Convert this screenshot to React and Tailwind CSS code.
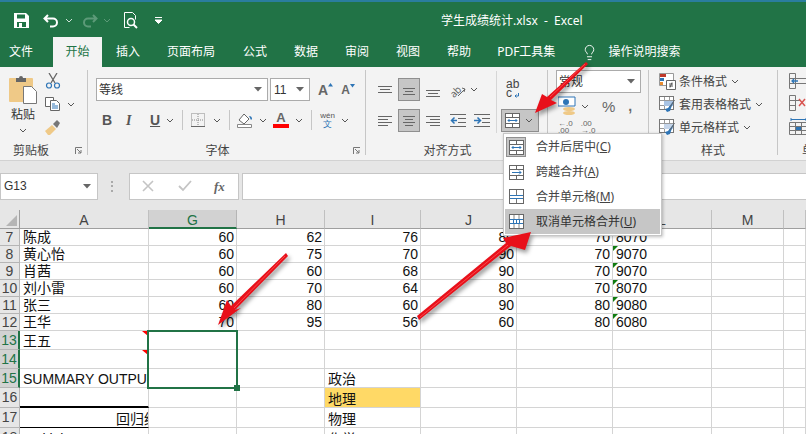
import React from "react";
import { Lightbulb } from "lucide-react";

const Caret = ({ className = "", color = "#555" }) => (
  <svg width="8" height="5" viewBox="0 0 8 5" className={className}>
    <path d="M1 1l3 3 3-3" fill="none" stroke={color} strokeWidth="1" />
  </svg>
);

const Solid = ({ className = "" }) => (
  <svg width="8" height="5" viewBox="0 0 8 5" className={className}>
    <path d="M0 0h8L4 4.500z" fill="#666" />
  </svg>
);

// lines: [x1, x2, y]
const Lines = ({ lines, w = 14, h = 12, color = "#666" }) => (
  <svg width={w} height={h} viewBox={`0 0 ${w} ${h}`} className="shrink-0">
    {lines.map((l, i) => (
      <line key={i} x1={l[0]} x2={l[1]} y1={l[2] + 0.5} y2={l[2] + 0.5} stroke={color} />
    ))}
  </svg>
);

const MergeIcon = ({ kind }) => (
  <svg width="15" height="15" viewBox="0 0 15 15" className="shrink-0">
    <rect x="0.500" y="0.500" width="14" height="14" fill="#fff" stroke="#666" />
    {kind === "center" && (
      <g>
        <path d="M1 4.500h13M1 10.500h13M7.500 1v3M7.500 11v3" stroke="#666" />
        <path d="M3 7.500h9M4.500 6l-1.500 1.500 1.500 1.500M10.500 6l1.500 1.500-1.500 1.500" stroke="#2e75b6" fill="none" />
      </g>
    )}
    {kind === "across" && (
      <g>
        <path d="M1 4.500h13M1 10.500h13M7.500 1v3M7.500 11v3" stroke="#666" />
        <path d="M3 7.500h9M10 5.500l2 2-2 2" stroke="#2e75b6" fill="none" />
      </g>
    )}
    {kind === "merge" && (
      <g>
        <path d="M7.500 1v5M7.500 10v4" stroke="#777" />
        <path d="M1 6.500h13M1 9.500h13" stroke="#2e75b6" />
      </g>
    )}
    {kind === "unmerge" && (
      <g>
        <path d="M1 5.500h13M1 9.500h13" stroke="#2e75b6" />
        <path d="M4.500 5v5M7.500 5v5M10.500 5v5" stroke="#2e75b6" />
        <path d="M5 1v4M10 1v4M5 10v4M10 10v4" stroke="#888" />
      </g>
    )}
  </svg>
);

const StyleIcon = ({ accent }) => (
  <svg width="17" height="17" viewBox="0 0 17 17" className="shrink-0">
    <rect x="0.500" y="0.500" width="14" height="13" fill="#fff" stroke="#777" />
    <path d="M1 4.500h13M1 9.500h13M5.500 1v12M10.500 1v12" stroke="#999" />
    <path d="M5 5h9v5H5z" fill={accent} />
    <path d="M15.500 4L9 12l-3 1 2 3 3-1 1-3z" fill="#2e75b6" />
    <path d="M15.500 4L11 11" stroke="#666" />
  </svg>
);

const Launcher = () => (
  <svg width="8" height="8" viewBox="0 0 8 8" className="absolute right-[4px] bottom-0">
    <path d="M0.500 7V0.500H7M2 2l4 4M6 3v3H3" fill="none" stroke="#777" />
  </svg>
);

const Label = ({ children, className = "" }) => (
  <div className={`mt-auto mb-[-3px] text-center text-[12px] leading-[14px] text-[#444] ${className}`}>{children}</div>
);

const Group = ({ className, children }) => (
  <div className={`relative flex flex-col shrink-0 border-r border-[#c6c6c6] ${className}`}>{children}</div>
);

const tabs = [
  ["插入", "ml-[14px]"],
  ["页面布局", "ml-[27px]"],
  ["公式", "ml-[28px]"],
  ["数据", "ml-[27px]"],
  ["审阅", "ml-[27px]"],
  ["视图", "ml-[27px]"],
  ["帮助", "ml-[27px]"],
  ["PDF工具集", "ml-[26px]"],
];

const sheetCols = "grid grid-cols-[20px_129px_88px_88px_96px_96px_96px_99px_72px_22px]";

const rows = [
  { n: 7, h: "h-[17px]", a: "陈成", v: [60, 62, 76, 80, 70], l: "8070" },
  { n: 8, h: "h-[17px]", a: "黄心怡", v: [60, 75, 70, 90, 70], l: "9070" },
  { n: 9, h: "h-[17px]", a: "肖茜", v: [60, 60, 68, 90, 70], l: "9070" },
  { n: 10, h: "h-[17px]", a: "刘小雷", v: [60, 70, 64, 80, 70], l: "8070" },
  { n: 11, h: "h-[17px]", a: "张三", v: [60, 80, 60, 90, 80], l: "9080" },
  { n: 12, h: "h-[17px]", a: "王华", v: [70, 95, 56, 60, 80], l: "6080" },
  { n: 13, h: "h-[19px]", a: "王五", note: true, sel: true },
  { n: 14, h: "h-[19px]", note: true, sel: true },
  { n: 15, h: "h-[19px]", a: "SUMMARY OUTPUT", i: "政治", sel: true },
  { n: 16, h: "h-[20px]", i: "地理", yellow: true, thick: true },
  { n: 17, h: "h-[20px]", a: "回归统计", i: "物理", center: true, thin: true },
  { n: 18, h: "h-[20px]", a: "Multiple R", i: "化学" },
];

const cell = "relative border-r border-b border-[#d4d4d4] overflow-hidden whitespace-nowrap";

const Row = ({ r }) => (
  <div className={`${sheetCols} ${r.h} text-[14px] leading-[15px] text-[#111]`}>
    <div
      className={`flex items-center justify-center border-r border-b border-[#b5b5b5] ${
        r.sel ? "bg-[#d2d2d2] text-[#217346] border-r-2 border-r-[#217346]" : "bg-[#e6e6e6] text-[#444]"
      }`}
    >
      {r.n}
    </div>
    <div
      className={`${cell} flex items-end ${r.center ? "pl-[96px]" : "pl-[3px]"} ${r.thick ? "border-b-2 border-b-black" : ""} ${
        r.thin ? "border-b-black" : ""
      }`}
    >
      {r.a}
      {r.note && (
        <span className="absolute right-0 top-0 w-[6px] h-[5px] bg-[#ff0000] [clip-path:polygon(0_0,100%_0,100%_100%)]" />
      )}
    </div>
    {(r.v || [null, null, null, null, null]).map((v, i) => {
      if (i === 2 && r.i) {
        return (
          <div key={i} className={`${cell} flex items-end pl-[3px] ${r.yellow ? "bg-[#ffd966]" : ""}`}>
            {r.i}
          </div>
        );
      }
      return (
        <div key={i} className={`${cell} flex items-end justify-end pr-[2px]`}>
          {v}
        </div>
      );
    })}
    <div className={`${cell} flex items-end pl-[3px]`}>
      {r.l}
      {r.l && (
        <span className="absolute left-0 top-0 w-[5px] h-[5px] bg-[#107c10] [clip-path:polygon(0_0,100%_0,0_100%)]" />
      )}
    </div>
    <div className={cell} />
    <div className={cell} />
  </div>
);

const colHeads = ["A", "G", "H", "I", "J", "K", "L", "M", ""];

const menu = [
  { kind: "center", text: "合并后居中", key: "C", boxed: true },
  { kind: "across", text: "跨越合并", key: "A" },
  { kind: "merge", text: "合并单元格", key: "M" },
  { kind: "unmerge", text: "取消单元格合并", key: "U", hot: true },
];

export default function App() {
  return (
    <div className="relative w-[806px] h-[434px] overflow-hidden bg-white font-['Noto_Sans','Noto_Sans_CJK_SC',sans-serif]">
      {/* title bar */}
      <div className="h-[37px] flex items-center pt-[2px] border-t-2 border-[#2a7d9e] bg-[#217346] text-white">
        <svg width="15" height="15" viewBox="0 0 15 15" className="ml-[14px] shrink-0">
          <path d="M0 0h12l3 3v12H0z" fill="#fff" />
          <path d="M3 1.500h8v4H3z" fill="#217346" />
          <path d="M3 9h9v5H3z" fill="#217346" />
          <path d="M5 10h3v4H5z" fill="#fff" />
        </svg>
        <svg width="16" height="14" viewBox="0 0 16 14" className="ml-[14px] shrink-0">
          <path d="M5 1L1.500 4.500 5 8M2 4.500h8a4 4 0 0 1 0 8H7" fill="none" stroke="#fff" strokeWidth="2" />
        </svg>
        <Caret color="#cfe3d8" className="ml-[6px]" />
        <svg width="16" height="14" viewBox="0 0 16 14" className="ml-[9px] shrink-0">
          <path d="M11 1l3.500 3.500L11 8M14 4.500H6a4 4 0 0 0 0 8h3" fill="none" stroke="#5c9a78" strokeWidth="2" />
        </svg>
        <Caret color="#5c9a78" className="ml-[5px]" />
        <svg width="16" height="17" viewBox="0 0 16 17" className="ml-[12px] shrink-0">
          <path d="M1.500 0.500h8l3 3v4M1.500 0.500v15h5" fill="none" stroke="#fff" />
          <circle cx="8" cy="10" r="3.500" fill="none" stroke="#fff" strokeWidth="1.500" />
          <path d="M10.500 12.500l3.500 3.500" stroke="#fff" strokeWidth="2" />
        </svg>
        <svg width="7" height="7" viewBox="0 0 7 7" className="ml-[16px] shrink-0">
          <path d="M0 0.500h7M0 3h7L3.500 6.500z" stroke="#fff" strokeWidth="1" fill="#fff" />
        </svg>
        <div className="ml-[279px] text-[12px] leading-none whitespace-pre">学生成绩统计.xlsx  -  Excel</div>
      </div>

      {/* tabs */}
      <div className="h-[30px] flex items-center bg-[#217346] text-white text-[12px] whitespace-nowrap">
        <div className="ml-[9px] mr-[20px]">文件</div>
        <div className="w-[49px] h-full flex items-center justify-center bg-[#f3f3f3] text-[#217346]">开始</div>
        {tabs.map(([t, m]) => (
          <div key={t} className={m}>
            {t}
          </div>
        ))}
        <Lightbulb size={17} strokeWidth={1.3} className="ml-[26px] shrink-0" />
        <div className="ml-[10px]">操作说明搜索</div>
      </div>

      {/* ribbon */}
      <div className="h-[94px] flex pt-[3px] pb-[5px] bg-[#f3f3f3] border-b border-[#d2d2d2]">
        <Group className="w-[88px]">
          <div className="flex">
            <div className="ml-[9px] w-[28px] flex flex-col items-center pt-[5px]">
              <svg width="28" height="29" viewBox="0 0 28 29">
                <rect x="0" y="3" width="24" height="24" rx="1" fill="#efc987" />
                <path d="M7 3h3a2 2 0 0 1 4 0h3v4H7z" fill="#666" />
                <path d="M14.500 11.500h8l5 5v12h-13z" fill="#fff" stroke="#777" />
              </svg>
              <div className="mt-[3px] text-[12px] leading-[16px] text-[#333]">粘贴</div>
              <Caret className="mt-[5px]" />
            </div>
            <div className="ml-[8px] flex flex-col pt-[3px]">
              <svg width="16" height="16" viewBox="0 0 16 16">
                <path d="M4 0l6 10M12 0L6 10" stroke="#666" strokeWidth="1.300" />
                <circle cx="4" cy="12.500" r="2.500" fill="none" stroke="#2e75b6" strokeWidth="1.200" />
                <circle cx="12" cy="12.500" r="2.500" fill="none" stroke="#2e75b6" strokeWidth="1.200" />
              </svg>
              <div className="flex items-center mt-[8px]">
                <svg width="16" height="14" viewBox="0 0 16 14">
                  <path d="M0.500 0.500h8v9h-8z" fill="#fff" stroke="#666" />
                  <path d="M5.500 3.500h6l3 3v7h-9z" fill="#fff" stroke="#666" />
                  <path d="M7 7h3M7 9h6M7 11h6" stroke="#2e75b6" />
                </svg>
                <Caret className="ml-[6px]" />
              </div>
              <svg width="16" height="15" viewBox="0 0 16 15" className="mt-[9px]">
                <path d="M0 11l7-6 4 4-6 6H3z" fill="#efc987" />
                <path d="M8 4l4-4 3 3-3 5z" fill="#777" />
              </svg>
            </div>
          </div>
          <Label className="pr-[25px]">剪贴板</Label>
          <Launcher />
        </Group>

        <Group className="w-[278px]">
          <div className="flex pl-[8px] pt-[8px] items-center">
            <div className="w-[172px] h-[23px] flex items-center justify-between bg-white border border-[#ababab] pl-[2px] pr-[5px] text-[12px] text-[#333]">
              等线
              <Solid />
            </div>
            <div className="ml-[2px] w-[40px] h-[23px] flex items-center justify-between bg-white border border-[#ababab] pl-[3px] pr-[5px] text-[12px] text-[#333] font-['Liberation_Sans']">
              11
              <Solid />
            </div>
            <div className="ml-[8px] flex items-start text-[#666] text-[14px] leading-none font-['Liberation_Sans'] font-bold">
              A
              <svg width="5" height="4" viewBox="0 0 5 4">
                <path d="M0 3.500h5L2.500 0z" fill="#2e75b6" />
              </svg>
            </div>
            <div className="ml-[8px] flex items-start text-[#666] text-[12px] leading-none font-['Liberation_Sans'] font-bold">
              A
              <svg width="5" height="4" viewBox="0 0 5 4">
                <path d="M0 0h5L2.500 3.500z" fill="#2e75b6" />
              </svg>
            </div>
          </div>
          <div className="flex items-center h-[20px] mt-[9px] pl-[14px] text-[14px] text-[#555] font-['Liberation_Sans']">
            <span className="w-[24px] font-bold">B</span>
            <span className="w-[24px] italic font-bold font-['Liberation_Serif']">I</span>
            <span className="w-[15px] underline font-bold">U</span>
            <Caret className="ml-[1px]" />
            <span className="ml-[8px] mr-[8px] w-px h-[20px] bg-[#c6c6c6]" />
            <svg width="14" height="14" viewBox="0 0 14 14">
              <path d="M0.500 0.500h13v13h-13zM7 1v12M1 7h12" fill="none" stroke="#888" strokeDasharray="1 1" />
              <path d="M0 13.500h14" stroke="#666" />
            </svg>
            <Caret className="ml-[8px]" />
            <span className="ml-[8px] mr-[7px] w-px h-[20px] bg-[#c6c6c6]" />
            <svg width="16" height="16" viewBox="0 0 16 16">
              <path d="M2 8l5-6 5 5-5 5z" fill="#fff" stroke="#666" />
              <path d="M12 4c2 0 3 1 3 3l-1 1z" fill="#2e75b6" />
              <path d="M0.500 12.500h14v3h-14z" fill="#fff" stroke="#888" />
            </svg>
            <Caret className="ml-[6px]" />
            <div className="ml-[6px] w-[16px] flex flex-col items-center font-bold text-[13px] leading-[12px] text-[#666]">
              A<span className="w-[16px] h-[4px] bg-[#ff0000]" />
            </div>
            <Caret className="ml-[6px]" />
            <span className="ml-[8px] mr-[8px] w-px h-[20px] bg-[#c6c6c6]" />
            <div className="w-[15px] flex flex-col items-center text-[8px] leading-[8px] text-[#555]">
              wén
              <span className="text-[#2e75b6] text-[9px] leading-[9px]">文</span>
            </div>
            <Caret className="ml-[6px]" />
          </div>
          <Label className="pr-[18px]">字体</Label>
          <Launcher />
        </Group>

        <Group className="w-[182px]">
          <div className="flex flex-1">
            <div className="w-[131px] border-r border-[#d6d6d6] mb-[11px] mt-[1px]">
              <div className="flex items-center pl-[12px] pt-[7px] h-[30px]">
                <Lines lines={[[0, 14, 2], [2, 12, 5], [0, 14, 8]]} />
                <div className="ml-[6px] w-[22px] h-[23px] flex items-center justify-center bg-[#c6c6c6] border border-[#8f8f8f]">
                  <Lines lines={[[1, 13, 4], [3, 11, 7], [1, 13, 10]]} />
                </div>
                <div className="ml-[6px] pt-[9px] flex">
                  <Lines lines={[[0, 14, 2], [2, 12, 5], [0, 14, 8]]} />
                </div>
                <svg width="17" height="16" viewBox="0 0 17 16" className="ml-[10px]">
                  <text x="0" y="13" fontSize="10" fill="#666" transform="rotate(-45 6 10)">ab</text>
                  <path d="M8 14l7-7M12 6l3 1-1 3" fill="none" stroke="#666" />
                </svg>
                <Caret className="ml-[3px]" />
              </div>
              <div className="flex items-center pl-[12px] mt-[8px] h-[23px]">
                <Lines lines={[[0, 14, 1], [0, 10, 4], [0, 14, 7], [0, 10, 10]]} />
                <div className="ml-[6px] w-[22px] h-[23px] flex items-center justify-center bg-[#c6c6c6] border border-[#8f8f8f]">
                  <Lines lines={[[1, 13, 1], [3, 11, 4], [1, 13, 7], [3, 11, 10]]} />
                </div>
                <div className="ml-[6px]">
                  <Lines lines={[[0, 14, 1], [4, 14, 4], [0, 14, 7], [4, 14, 10]]} />
                </div>
                <svg width="16" height="13" viewBox="0 0 16 13" className="ml-[10px]">
                  <path d="M0 0.500h16M8 4.500h8M8 8.500h8M0 12.500h16" stroke="#666" />
                  <path d="M7 6.500H2M4.500 3.500l-3 3 3 3" fill="none" stroke="#2e75b6" strokeWidth="1.500" />
                </svg>
                <svg width="16" height="13" viewBox="0 0 16 13" className="ml-[8px]">
                  <path d="M0 0.500h16M8 4.500h8M8 8.500h8M0 12.500h16" stroke="#666" />
                  <path d="M0 6.500h6M3.500 3.500l3 3-3 3" fill="none" stroke="#2e75b6" strokeWidth="1.500" />
                </svg>
              </div>
            </div>
            <div className="pl-[4px] pt-[10px]">
              <div className="ml-[5px] w-[16px] h-[18px] flex text-[#444] text-[12px] leading-[9px] font-['Liberation_Sans']">
                <span>
                  ab
                  <br />c
                </span>
                <svg width="5" height="5" viewBox="0 0 5 5" className="mt-[13px] ml-[-5px]">
                  <path d="M4.500 0v3H1M2.500 1.500L1 3l1.500 1.500" fill="none" stroke="#2e75b6" />
                </svg>
              </div>
              <div className="mt-[11px] w-[38px] h-[23px] flex items-center justify-between pl-[3px] pr-[5px] bg-[#c6c6c6] border border-[#8f8f8f]">
                <MergeIcon kind="center" />
                <Caret />
              </div>
            </div>
          </div>
          <Label className="pr-[18px]">对齐方式</Label>
          <Launcher />
        </Group>

        <Group className="w-[101px]">
          <div className="ml-[8px] w-[85px] h-[23px] flex items-center justify-between bg-white border border-[#ababab] pl-[2px] pr-[5px] text-[12px] text-[#333]">
            常规
            <Solid />
          </div>
          <div className="ml-[10px] mt-[3px] h-[20px] flex items-center text-[#666]">
            <svg width="19" height="20" viewBox="0 0 19 20">
              <path d="M0 1h17v9H0z" fill="#fff" stroke="#2e75b6" />
              <circle cx="8" cy="6" r="3" fill="#2e75b6" />
              <ellipse cx="11" cy="13" rx="6" ry="2" fill="#efc987" />
              <ellipse cx="11" cy="17" rx="6" ry="2" fill="#efc987" />
            </svg>
            <Caret className="ml-[4px]" />
            <span className="ml-[13px] text-[15px] leading-none font-['Liberation_Sans']">%</span>
            <span className="ml-[13px] text-[14px] leading-none font-bold font-['Liberation_Sans']">,</span>
          </div>
          <div className="ml-[10px] mt-[4px] flex gap-[8px] text-[8px] leading-[7px] text-[#666] font-['Liberation_Sans']">
            <span>←.0<br />.00</span>
            <span>.00<br />→.0</span>
          </div>
        </Group>

        <Group className="w-[129px]">
          <div className="pl-[10px] pt-[3px] flex flex-col gap-[6px] text-[12px] leading-[17px] text-[#444]">
            <div className="flex items-center">
              <svg width="17" height="17" viewBox="0 0 17 17" className="shrink-0">
                <path d="M0.500 0.500h14v12h-14z" fill="#fff" stroke="#999" />
                <path d="M1 1h6v3H1z" fill="#c0392b" />
                <path d="M1 5h4v3H1z" fill="#2e75b6" />
                <path d="M1 9h3v3H1z" fill="#e88b2e" />
                <path d="M7.500 7.500h9v9h-9z" fill="#fff" stroke="#666" />
                <path d="M10 11h4M10 13h4M13 9.500l-2 5" stroke="#555" />
              </svg>
              <span className="ml-[3px]">条件格式</span>
              <Caret className="ml-[4px]" />
            </div>
            <div className="flex items-center">
              <StyleIcon accent="#a9c4e4" />
              <span className="ml-[3px]">套用表格格式</span>
              <Caret className="ml-[4px]" />
            </div>
            <div className="flex items-center">
              <StyleIcon accent="#c5d5ea" />
              <span className="ml-[3px]">单元格样式</span>
              <Caret className="ml-[4px]" />
            </div>
          </div>
          <Label>样式</Label>
        </Group>

        <div className="flex flex-col pl-[11px]">
          <div className="flex flex-col gap-[6px] pt-[3px]">
            <svg width="19" height="16" viewBox="0 0 19 16">
              <path d="M0.500 0.500h6v15h-6zM0.500 5.500h6M0.500 10.500h6M7 5.500h12v5H7" fill="none" stroke="#777" />
              <path d="M9 8H3M5 6L3 8l2 2" fill="none" stroke="#2e75b6" strokeWidth="1.300" />
            </svg>
            <svg width="19" height="16" viewBox="0 0 19 16">
              <path d="M0.500 0.500h6v15h-6zM0.500 5.500h6M0.500 10.500h6M7 5.500h4" fill="none" stroke="#777" />
              <path d="M10 4l6 7M16 4l-6 7" stroke="#d9534f" strokeWidth="1.500" />
            </svg>
            <svg width="19" height="18" viewBox="0 0 19 18">
              <path d="M2 1v3M17 1v3M2 2.500h15" stroke="#2e75b6" />
              <path d="M0.500 5.500h18v12H0.500zM6.500 6v11M12.500 6v11M1 9.500h17M1 13.500h17" fill="none" stroke="#777" />
              <path d="M7 10h5v3H7z" fill="#2e75b6" />
            </svg>
          </div>
          <div className="mt-auto mb-[-3px] ml-[13px] text-[12px] leading-[14px] text-[#444]">单</div>
        </div>
      </div>

      {/* formula bar */}
      <div className="h-[49px] flex items-center bg-[#e6e6e6] pt-[1px]">
        <div className="w-[98px] h-[27px] flex items-center justify-between bg-white border border-[#c6c6c6] pl-[3px] pr-[6px] text-[12px] text-[#333] font-['Liberation_Sans']">
          G13
          <Solid />
        </div>
        <div className="ml-[13px] w-[3px] h-[11px] flex flex-col justify-between">
          <span className="w-[2px] h-[2px] bg-[#aaa]" />
          <span className="w-[2px] h-[2px] bg-[#aaa]" />
          <span className="w-[2px] h-[2px] bg-[#aaa]" />
        </div>
        <div className="ml-[15px] w-[110px] h-[27px] flex items-center bg-white border border-[#c6c6c6]">
          <svg width="12" height="12" viewBox="0 0 12 12" className="ml-[12px]">
            <path d="M1 1l10 10M11 1L1 11" stroke="#c4c4c4" strokeWidth="1.600" />
          </svg>
          <svg width="14" height="12" viewBox="0 0 14 12" className="ml-[24px]">
            <path d="M1 6l4 4 8-9" fill="none" stroke="#c4c4c4" strokeWidth="1.800" />
          </svg>
          <span className="ml-[22px] text-[13px] leading-none italic font-bold text-[#666] font-['Liberation_Serif']">fx</span>
        </div>
        <div className="ml-[3px] flex-1 h-[27px] bg-white border-y border-l border-[#c6c6c6]" />
      </div>

      {/* sheet */}
      <div className="relative">
        <div className={`${sheetCols} h-[19px] bg-[#e6e6e6] text-[14px] leading-none text-[#444] font-['Liberation_Sans']`}>
          <div className="relative border-r border-b border-[#9f9f9f]">
            <span className="absolute right-[2px] bottom-[2px] w-[11px] h-[11px] bg-[#b5b5b5] [clip-path:polygon(100%_0,100%_100%,0_100%)]" />
          </div>
          {colHeads.map((c, i) =>
            c === "G" ? (
              <div key={i} className="flex items-center justify-center pt-[2px] bg-[#d2d2d2] text-[#217346] border-r border-[#b5b5b5] border-b-2 border-b-[#217346]">
                {c}
              </div>
            ) : (
              <div key={i} className="flex items-center justify-center pt-[2px] border-r border-b border-r-[#c0c0c0] border-b-[#9f9f9f]">
                {c}
              </div>
            )
          )}
        </div>
        <div className="font-['Liberation_Sans','Noto_Sans_CJK_SC',sans-serif]">
          {rows.map((r) => (
            <Row key={r.n} r={r} />
          ))}
        </div>
        {/* selection */}
        <div className="absolute left-[147px] top-[120px] w-[91px] h-[59px] border-2 border-[#217346]">
          <span className="absolute right-[-4px] bottom-[-4px] w-[6px] h-[6px] bg-[#217346]" />
        </div>
      </div>

      {/* merge menu */}
      <div className="absolute left-[503px] top-[133px] w-[159px] h-[103px] flex flex-col p-px bg-white border border-[#c6c6c6] shadow-[1px_1px_3px_rgba(0,0,0,0.25)] text-[12px] text-[#444]">
        {menu.map((m) => (
          <div key={m.key} className={`h-[25px] flex items-center ${m.hot ? "bg-[#c6c6c6] text-[#333]" : ""}`}>
            <div className={`ml-[1px] w-[20px] h-[20px] flex items-center justify-center ${m.boxed ? "bg-[#c6c6c6] border border-[#8f8f8f]" : ""}`}>
              <MergeIcon kind={m.kind} />
            </div>
            <span className="ml-[10px] whitespace-nowrap">
              {m.text}(<span className="underline">{m.key}</span>)
            </span>
          </div>
        ))}
      </div>

      {/* red arrows drawn over the screenshot */}
      <svg width="806" height="434" viewBox="0 0 806 434" className="absolute left-0 top-0 pointer-events-none drop-shadow-[2px_3px_2px_rgba(0,0,0,0.4)]">
        <polygon points="586,62 547,97 542,94 535,113 557,103 551,100 588,64" fill="#e8101a" />
        <polygon points="286,253 231,306 227,300 218,325 241,308 235,310 288,256" fill="#e8101a" />
        <polygon points="417,316 506,243 503,238 531,232 525,250 511,246 419,320" fill="#e8101a" />
        <path d="M585 64L550 97M285 256L234 308M420 317L508 245" stroke="#ff6060" strokeWidth="0.700" />
      </svg>
    </div>
  );
}
